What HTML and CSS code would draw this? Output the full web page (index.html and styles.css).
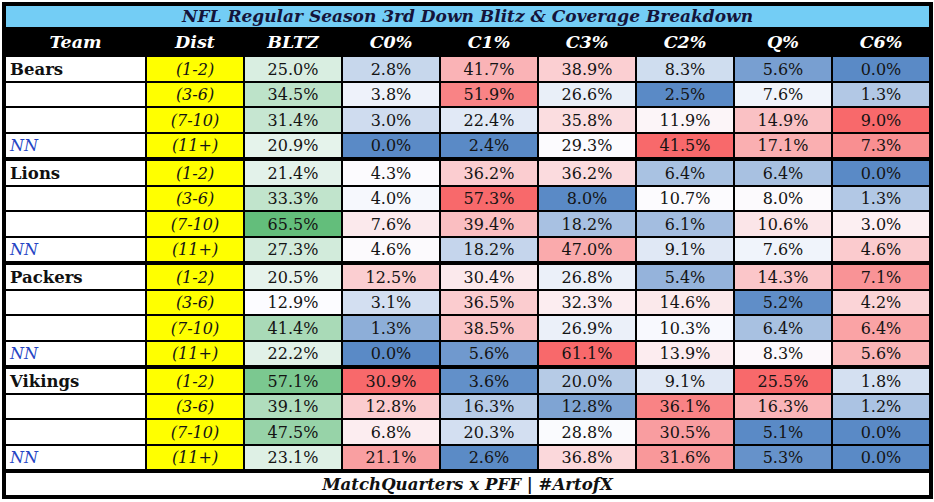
FILE: index.html
```html
<!DOCTYPE html>
<html>
<head>
<meta charset="utf-8">
<link rel="stylesheet" href="styles.css">
</head>
<body>
<div class="sheet">
  <div class="title">NFL Regular Season 3rd Down Blitz &amp; Coverage Breakdown</div>
  <div class="head">
    <div>Team</div><div>Dist</div><div>BLTZ</div><div>C0%</div><div>C1%</div><div>C3%</div><div>C2%</div><div>Q%</div><div>C6%</div>
  </div>
  <div class="group">
    <div class="team">Bears</div><div class="dist">(1-2)</div><div class="b">25.0%</div><div class="v">2.8%</div><div class="v">41.7%</div><div class="v">38.9%</div><div class="v">8.3%</div><div class="v">5.6%</div><div class="v">0.0%</div>
    <div class="team"></div><div class="dist">(3-6)</div><div class="b">34.5%</div><div class="v">3.8%</div><div class="v">51.9%</div><div class="v">26.6%</div><div class="v">2.5%</div><div class="v">7.6%</div><div class="v">1.3%</div>
    <div class="team"></div><div class="dist">(7-10)</div><div class="b">31.4%</div><div class="v">3.0%</div><div class="v">22.4%</div><div class="v">35.8%</div><div class="v">11.9%</div><div class="v">14.9%</div><div class="v">9.0%</div>
    <div class="team nn">NN</div><div class="dist">(11+)</div><div class="b">20.9%</div><div class="v">0.0%</div><div class="v">2.4%</div><div class="v">29.3%</div><div class="v">41.5%</div><div class="v">17.1%</div><div class="v">7.3%</div>
  </div>
  <div class="group">
    <div class="team">Lions</div><div class="dist">(1-2)</div><div class="b">21.4%</div><div class="v">4.3%</div><div class="v">36.2%</div><div class="v">36.2%</div><div class="v">6.4%</div><div class="v">6.4%</div><div class="v">0.0%</div>
    <div class="team"></div><div class="dist">(3-6)</div><div class="b">33.3%</div><div class="v">4.0%</div><div class="v">57.3%</div><div class="v">8.0%</div><div class="v">10.7%</div><div class="v">8.0%</div><div class="v">1.3%</div>
    <div class="team"></div><div class="dist">(7-10)</div><div class="b">65.5%</div><div class="v">7.6%</div><div class="v">39.4%</div><div class="v">18.2%</div><div class="v">6.1%</div><div class="v">10.6%</div><div class="v">3.0%</div>
    <div class="team nn">NN</div><div class="dist">(11+)</div><div class="b">27.3%</div><div class="v">4.6%</div><div class="v">18.2%</div><div class="v">47.0%</div><div class="v">9.1%</div><div class="v">7.6%</div><div class="v">4.6%</div>
  </div>
  <div class="group">
    <div class="team">Packers</div><div class="dist">(1-2)</div><div class="b">20.5%</div><div class="v">12.5%</div><div class="v">30.4%</div><div class="v">26.8%</div><div class="v">5.4%</div><div class="v">14.3%</div><div class="v">7.1%</div>
    <div class="team"></div><div class="dist">(3-6)</div><div class="b">12.9%</div><div class="v">3.1%</div><div class="v">36.5%</div><div class="v">32.3%</div><div class="v">14.6%</div><div class="v">5.2%</div><div class="v">4.2%</div>
    <div class="team"></div><div class="dist">(7-10)</div><div class="b">41.4%</div><div class="v">1.3%</div><div class="v">38.5%</div><div class="v">26.9%</div><div class="v">10.3%</div><div class="v">6.4%</div><div class="v">6.4%</div>
    <div class="team nn">NN</div><div class="dist">(11+)</div><div class="b">22.2%</div><div class="v">0.0%</div><div class="v">5.6%</div><div class="v">61.1%</div><div class="v">13.9%</div><div class="v">8.3%</div><div class="v">5.6%</div>
  </div>
  <div class="group">
    <div class="team">Vikings</div><div class="dist">(1-2)</div><div class="b">57.1%</div><div class="v">30.9%</div><div class="v">3.6%</div><div class="v">20.0%</div><div class="v">9.1%</div><div class="v">25.5%</div><div class="v">1.8%</div>
    <div class="team"></div><div class="dist">(3-6)</div><div class="b">39.1%</div><div class="v">12.8%</div><div class="v">16.3%</div><div class="v">12.8%</div><div class="v">36.1%</div><div class="v">16.3%</div><div class="v">1.2%</div>
    <div class="team"></div><div class="dist">(7-10)</div><div class="b">47.5%</div><div class="v">6.8%</div><div class="v">20.3%</div><div class="v">28.8%</div><div class="v">30.5%</div><div class="v">5.1%</div><div class="v">0.0%</div>
    <div class="team nn">NN</div><div class="dist">(11+)</div><div class="b">23.1%</div><div class="v">21.1%</div><div class="v">2.6%</div><div class="v">36.8%</div><div class="v">31.6%</div><div class="v">5.3%</div><div class="v">0.0%</div>
  </div>
  <div class="foot">MatchQuarters x PFF | #ArtofX</div>
</div>
<script src="script.js"></script>
</body>
</html>
```

FILE: styles.css
```css
html, body {
  margin: 0;
  padding: 0;
  background: #ffffff;
}
body {
  padding: 2px 0 0 2px;
  font-family: "DejaVu Serif", "Liberation Serif", serif;
  color: #141414;
}
.sheet {
  width: 923px;
  border: 4px solid #000;
  background: #000;
  display: flex;
  flex-direction: column;
}
.title {
  height: 21px;
  background: #73cdf5;
  color: #14143a;
  font-weight: bold;
  font-style: italic;
  font-size: 17px;
  line-height: 21px;
  text-align: center;
}
.head {
  height: 30px;
  display: grid;
  grid-template-columns: 139px repeat(8, 96px);
  column-gap: 2px;
  background: #000;
  color: #fff;
  font-weight: bold;
  font-style: italic;
  font-size: 17.5px;
  line-height: 30px;
  text-align: center;
}
.group {
  display: grid;
  grid-template-columns: 139px repeat(8, 96px);
  grid-template-rows: 24px 23px 24px 23px;
  column-gap: 2px;
  row-gap: 2px;
  font-size: 16px;
  text-align: center;
}
.group + .group {
  margin-top: 4px;
}
.group > div {
  display: flex;
  align-items: center;
  justify-content: center;
  background: #fff;
}
.group > .team {
  justify-content: flex-start;
  padding-left: 4px;
  font-weight: bold;
  font-size: 16.5px;
  color: #111;
}
.group > .team.nn {
  font-weight: normal;
  font-style: italic;
  color: #2545c4;
  font-size: 16px;
}
.group > .dist {
  background: #ffff00;
  font-style: italic;
  font-size: 16px;
}
.foot {
  margin-top: 4px;
  height: 22px;
  background: #fff;
  color: #111;
  font-weight: bold;
  font-style: italic;
  font-size: 16.6px;
  line-height: 22px;
  text-align: center;
}
```

FILE: script.js
```js
(function () {
  var blue = [90, 138, 198], white = [252, 252, 255], red = [248, 105, 107], green = [99, 190, 123];
  function mix(a, b, t) {
    t = Math.max(0, Math.min(1, t));
    return 'rgb(' + a.map(function (x, i) { return Math.round(x + (b[i] - x) * t); }).join(',') + ')';
  }
  var groups = document.querySelectorAll('.group');
  var cols = [];
  groups.forEach(function (g) {
    var cells = g.children;
    for (var r = 0; r < 4; r++) {
      for (var c = 2; c < 9; c++) {
        var el = cells[r * 9 + c];
        (cols[c] = cols[c] || []).push(el);
      }
    }
  });
  cols.forEach(function (list, c) {
    if (!list) return;
    var vals = list.map(function (el) { return parseFloat(el.textContent); });
    var s = vals.slice().sort(function (a, b) { return a - b; });
    var min = s[0], max = s[s.length - 1];
    var n = s.length, med = (s[n / 2 - 1] + s[n / 2]) / 2;
    list.forEach(function (el, i) {
      var v = vals[i];
      if (c === 2) {
        el.style.background = mix(white, green, (v - min) / (max - min));
      } else if (v <= med) {
        el.style.background = mix(blue, white, med === min ? 1 : (v - min) / (med - min));
      } else {
        el.style.background = mix(white, red, (v - med) / (max - med));
      }
    });
  });
})();
```
